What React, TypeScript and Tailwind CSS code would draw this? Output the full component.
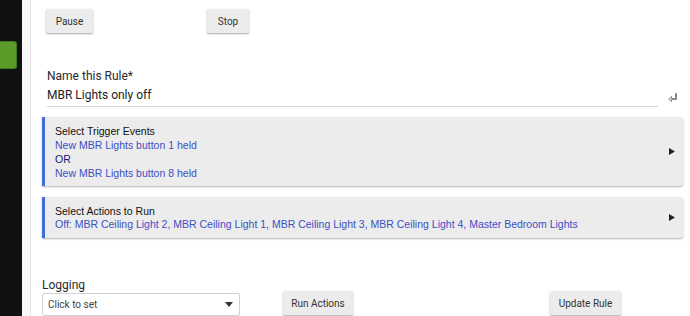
import React from "react";

const Btn = ({ label, className = "" }: { label: string; className?: string }) => (
  <button
    className={`h-[24px] rounded-[2px] bg-[#ececec] text-[10px] text-[#333] shadow-[0_1px_2px_rgba(0,0,0,0.35)] ${className}`}
    style={{ fontFamily: "Roboto, sans-serif" }}
  >
    {label}
  </button>
);

const Caret = () => (
  <svg width="6" height="7" viewBox="0 0 6 7" className="mr-[8px]">
    <path d="M0 0 L6 3.5 L0 7 Z" fill="#222" />
  </svg>
);

const App = () => {
  return (
    <div className="flex w-[690px] h-[316px] overflow-hidden bg-white">
      <div className="w-[22px] shrink-0 bg-[#111] pt-[41px]">
        <div className="w-[17px] h-[28px] bg-[#5a9b2a] rounded-r-[3px] border border-l-0 border-[#3f7a1c]" />
      </div>
      <div className="w-[9px] shrink-0 bg-[#f8f8f8] border-r border-[#e6e6e6]" />
      <div className="flex-1 pl-[11px] pr-[7px]" style={{ fontFamily: "Roboto, sans-serif" }}>
        <div className="flex pt-[9px] pl-[4px]">
          <Btn label="Pause" className="w-[47px]" />
          <Btn label="Stop" className="w-[42px] ml-[114px]" />
        </div>

        <div className="pl-[5px] mt-[35px]">
          <div className="text-[12px] leading-[16px] text-[#2a2a2a]">Name this Rule*</div>
          <div className="flex items-end mt-[3px]">
            <div className="w-[611px] h-[20px] text-[12px] leading-[16px] text-[#222] border-b border-[#d6d6d6]">
              MBR Lights only off
            </div>
            <svg width="9" height="9" viewBox="0 0 9 9" className="ml-[10px] mb-[5px]">
              <path d="M7.5 0.5 V5.5 H3.5 V3.5 L0.8 6 L3.5 8.5 V6.5 H8.5 V0.5 Z" fill="none" stroke="#777" strokeWidth="0.9" />
            </svg>
          </div>
        </div>

        <div
          className="mt-[10px] flex items-center h-[69px] bg-[#ececec] border-l-[3px] border-[#3f6fd2] rounded-r-[3px] shadow-[0_1px_2px_rgba(0,0,0,0.3)]"
          style={{ fontFamily: "'Liberation Sans', Arial, sans-serif" }}
        >
          <div className="flex-1 pl-[10px] text-[10.5px] leading-[14px]">
            <div className="text-[#111]">Select Trigger Events</div>
            <div className="text-[#3c4fc4]">New MBR Lights button 1 held</div>
            <div className="text-[#14157a]">OR</div>
            <div className="text-[#3c4fc4]">New MBR Lights button 8 held</div>
          </div>
          <Caret />
        </div>

        <div
          className="mt-[11px] flex items-center h-[41px] bg-[#ececec] border-l-[3px] border-[#3f6fd2] rounded-r-[3px] shadow-[0_1px_2px_rgba(0,0,0,0.3)]"
          style={{ fontFamily: "'Liberation Sans', Arial, sans-serif" }}
        >
          <div className="flex-1 pl-[10px] text-[10.5px] leading-[13px]">
            <div className="text-[#111]">Select Actions to Run</div>
            <div className="text-[#3c4fc4]">
              Off: MBR Ceiling Light 2, MBR Ceiling Light 1, MBR Ceiling Light 3, MBR Ceiling Light 4, Master Bedroom Lights
            </div>
          </div>
          <Caret />
        </div>

        <div className="flex items-end mt-[40px]">
          <div>
            <div className="text-[12px] leading-[14px] text-[#2a2a2a]">Logging</div>
            <div className="mt-[1px] flex items-center justify-between w-[198px] h-[23px] border border-[#d0d0d0] rounded-[2px] pl-[5px] pr-[6px]">
              <span className="text-[10px] text-[#444]">Click to set</span>
              <svg width="8" height="5" viewBox="0 0 8 5">
                <path d="M0 0 H8 L4 5 Z" fill="#333" />
              </svg>
            </div>
          </div>
          <Btn label="Run Actions" className="w-[70px] ml-[43px] mb-[1px]" />
          <Btn label="Update Rule" className="w-[71px] ml-[197px] mb-[1px]" />
        </div>
      </div>
    </div>
  );
};

export default App;
